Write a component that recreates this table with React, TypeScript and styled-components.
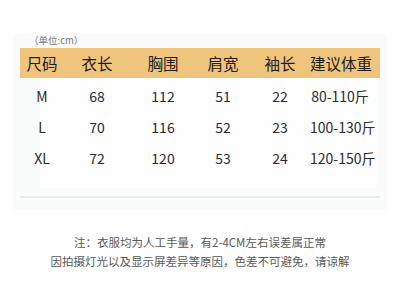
import styled, { createGlobalStyle } from "styled-components"

const GlobalStyle = createGlobalStyle`
    html, body {
        margin: 0;
        padding: 0;
        background: #fff;
        font-family: "Noto Sans CJK SC", "Noto Sans", sans-serif;
    }
`;

const Page = styled.div`
    width: 400px;
    height: 295px;
    padding-top: 34px;
    box-sizing: border-box;
    overflow: hidden;
`;

const Card = styled.div`
    margin-left: 13px;
    width: 374px;
    height: 176px;
    background: #fafbfb;
    padding: 0 7px;
    box-sizing: border-box;
    display: flex;
    flex-direction: column;
`;

const Unit = styled.div`
    height: 14px;
    padding-left: 9px;
    font-size: 9.5px;
    line-height: 13px;
    color: #777;
`;

const Grid = styled.div<{ head?: boolean }>`
    display: grid;
    grid-template-columns: 44px 66px 66px 54px 60px 60px;
    align-items: center;
    height: ${props => props.head ? "30px" : "31px"};
    background: ${props => props.head ? "#efc47d" : "transparent"};
    font-size: ${props => props.head ? "15.5px" : "14px"};
    color: ${props => props.head ? "#1e1e1e" : "#2b2b2b"};
`;

const Cell = styled.span`
    text-align: center;
    white-space: nowrap;
`;

const Body = styled.div`
    margin-left: 20px;
    margin-right: 3px;
    height: 110px;
    padding-top: 2px;
    box-sizing: border-box;
    background: #fefefe;
    ${Grid} {
        margin-left: -20px;
    }
`;

const Rule = styled.div`
    margin-top: 8px;
    height: 2px;
    background: #e8eaec;
`;

const Note = styled.div`
    margin-top: 23px;
    text-align: center;
    font-size: 11.5px;
    line-height: 19px;
    color: #595959;
`;

const head = ["尺码", "衣长", "胸围", "肩宽", "袖长", "建议体重"];
const rows = [
    ["M", "68", "112", "51", "22", "80-110斤"],
    ["L", "70", "116", "52", "23", "100-130斤"],
    ["XL", "72", "120", "53", "24", "120-150斤"],
];

const App = () => {
    return (
        <Page>
            <GlobalStyle />
            <Card>
                <Unit>（单位:cm）</Unit>
                <Grid head>
                    {head.map(h => <Cell key={h}>{h}</Cell>)}
                </Grid>
                <Body>
                    {rows.map(r => (
                        <Grid key={r[0]}>
                            {r.map((v, i) => <Cell key={i}>{v}</Cell>)}
                        </Grid>
                    ))}
                </Body>
                <Rule />
            </Card>
            <Note>
                注：衣服均为人工手量，有2-4CM左右误差属正常<br />
                因拍摄灯光以及显示屏差异等原因，色差不可避免，请谅解
            </Note>
        </Page>
    );
};

export default App;
